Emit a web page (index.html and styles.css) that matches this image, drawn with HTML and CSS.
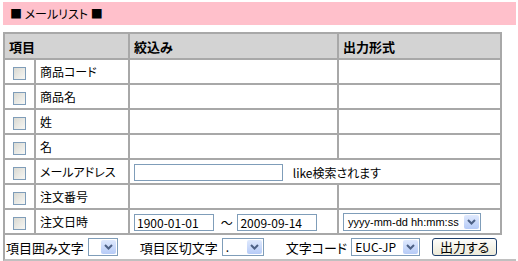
FILE: index.html
```html
<!DOCTYPE html>
<html>
<head>
  <meta charset="utf-8">
  <title>メールリスト</title>
  <link rel="stylesheet" href="styles.css">
</head>
<body>

  <!-- Page title bar -->
  <div class="title">■ メールリスト ■</div>

  <!-- Column chooser / filter table -->
  <table class="list">
    <colgroup>
      <col class="c-check">
      <col class="c-name">
      <col class="c-filter">
      <col class="c-format">
    </colgroup>
    <tr class="head">
      <th colspan="2">項目</th>
      <th>絞込み</th>
      <th>出力形式</th>
    </tr>
    <tr>
      <td class="chk"><span class="box"></span></td>
      <td>商品コード</td>
      <td></td>
      <td></td>
    </tr>
    <tr>
      <td class="chk"><span class="box"></span></td>
      <td>商品名</td>
      <td></td>
      <td></td>
    </tr>
    <tr>
      <td class="chk"><span class="box"></span></td>
      <td>姓</td>
      <td></td>
      <td></td>
    </tr>
    <tr>
      <td class="chk"><span class="box"></span></td>
      <td>名</td>
      <td></td>
      <td></td>
    </tr>
    <tr>
      <td class="chk"><span class="box"></span></td>
      <td>メールアドレス</td>
      <td colspan="2" class="filter">
        <span class="field email"></span>
        <span class="hint">like検索されます</span>
      </td>
    </tr>
    <tr>
      <td class="chk"><span class="box"></span></td>
      <td>注文番号</td>
      <td></td>
      <td></td>
    </tr>
    <tr>
      <td class="chk"><span class="box"></span></td>
      <td>注文日時</td>
      <td class="filter">
        <span class="field date">1900-01-01</span>
        <span class="tilde">～</span>
        <span class="field date">2009-09-14</span>
      </td>
      <td class="filter">
        <span class="combo fmt"><span class="val">yyyy-mm-dd hh:mm:ss</span><span class="arrow"><svg width="9" height="6" viewBox="0 0 9 6"><path d="M1 1l3.5 3.5L8 1" fill="none" stroke="#4d6185" stroke-width="2"/></svg></span></span>
      </td>
    </tr>
  </table>

  <!-- Output options -->
  <div class="footer">
    <span class="lbl">項目囲み文字</span>
    <span class="combo enc"><span class="val"></span><span class="arrow"><svg width="9" height="6" viewBox="0 0 9 6"><path d="M1 1l3.5 3.5L8 1" fill="none" stroke="#4d6185" stroke-width="2"/></svg></span></span>
    <span class="lbl gap">項目区切文字</span>
    <span class="combo sep"><span class="val">.</span><span class="arrow"><svg width="9" height="6" viewBox="0 0 9 6"><path d="M1 1l3.5 3.5L8 1" fill="none" stroke="#4d6185" stroke-width="2"/></svg></span></span>
    <span class="lbl gap">文字コード</span>
    <span class="combo code"><span class="val">EUC-JP</span><span class="arrow"><svg width="9" height="6" viewBox="0 0 9 6"><path d="M1 1l3.5 3.5L8 1" fill="none" stroke="#4d6185" stroke-width="2"/></svg></span></span>
    <span class="btn">出力する</span>
  </div>

</body>
</html>
```

FILE: styles.css
```css
/* Page base */
body {
  margin: 2px 2px 0 3px;
  font-family: "Noto Sans CJK JP", "DejaVu Sans", sans-serif;
  font-size: 12px;
  font-feature-settings: "palt";
  color: #000;
  background: #fff;
}

/* Pink title bar */
.title {
  background-color: #ffc0cb;
  height: 23px;
  line-height: 23px;
  padding-left: 7px;
  font-size: 12px;
}

/* Main table */
.list {
  margin-top: 7px;
  width: 497px;
  table-layout: fixed;
  border-collapse: collapse;
}

.list col.c-check { width: 31px; }
.list col.c-name { width: 94px; }
.list col.c-filter { width: 209px; }
.list col.c-format { width: 163px; }

.list th,
.list td {
  border: 2px solid #a8a8a8;
  height: 23px;
  padding: 0 0 0 4px;
  text-align: left;
  vertical-align: middle;
  white-space: nowrap;
}

.list tr.head th {
  background-color: #d3d3d3;
  font-size: 13px;
  font-weight: bold;
  height: 24px;
}

/* Fake XP checkbox */
.list td.chk {
  padding: 0;
  text-align: center;
}

.box {
  display: inline-block;
  width: 11px;
  height: 11px;
  border: 1px solid #7f9db9;
  background: linear-gradient(135deg, #d9d9d2, #f7f7f4);
  vertical-align: middle;
}

/* Filter cells */
.list td.filter {
  padding-left: 4px;
}

.field {
  display: inline-block;
  box-sizing: border-box;
  height: 17px;
  line-height: 15px;
  border: 1px solid #7f9db9;
  background: #fff;
  padding: 0 2px;
  vertical-align: middle;
  font-size: 12px;
}

.field.email { width: 149px; }
.field.date { width: 80px; }

.hint {
  margin-left: 7px;
  vertical-align: middle;
}

.tilde {
  display: inline-block;
  width: 14px;
  margin: 0 0 0 4px;
  vertical-align: middle;
}

/* Fake XP drop-down */
.combo {
  display: inline-flex;
  box-sizing: border-box;
  height: 18px;
  border: 1px solid #7f9db9;
  background: #fff;
  vertical-align: middle;
  align-items: stretch;
}

.combo .val {
  flex: 1;
  line-height: 16px;
  padding-left: 3px;
  font-size: 12px;
  overflow: hidden;
  white-space: nowrap;
}

.combo .arrow {
  width: 15px;
  margin: 1px;
  border-radius: 2px;
  background: linear-gradient(#dfe9fd, #b6cbf7);
  display: flex;
  align-items: center;
  justify-content: center;
}

.combo.fmt { width: 138px; }
.combo.fmt .val {
  font-family: "Liberation Sans", sans-serif;
  font-size: 11px;
  padding-left: 4px;
}
.combo.enc { width: 30px; }
.combo.sep { width: 42px; }
.combo.code { width: 69px; }

/* Bottom options row */
.footer {
  display: flex;
  align-items: center;
  height: 24px;
  border-left: 2px solid #a8a8a8;
  border-bottom: 2px solid #c0c0c0;
  font-size: 13px;
  padding-left: 1px;
}

.footer .lbl {
  margin-right: 4px;
}

.footer .lbl.gap {
  margin-left: 22px;
}

.btn {
  display: inline-block;
  margin-left: 12px;
  width: 65px;
  height: 18px;
  box-sizing: border-box;
  border: 1px solid #1d3e6b;
  border-radius: 3px;
  background: linear-gradient(#fdfdfb, #ece9d8);
  text-align: center;
  line-height: 16px;
  font-size: 13px;
}
```
